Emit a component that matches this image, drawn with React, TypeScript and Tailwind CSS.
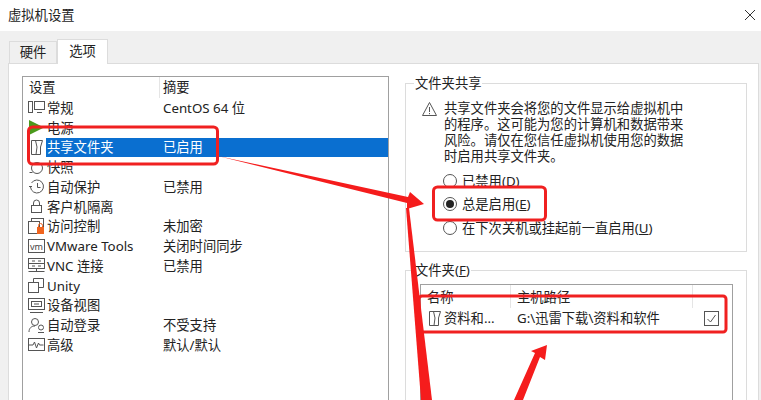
import React from 'react';

const font = { fontFamily: '"Noto Sans", "Noto Sans CJK SC", sans-serif' };

const ic = 'w-[17px] h-[17px] shrink-0';

const GeneralIcon = () => (
  <svg viewBox="0 0 17 17" className={ic} fill="none" stroke="#555" strokeWidth="1">
    <rect x="0.5" y="2.5" width="4" height="11" />
    <rect x="6.5" y="2.5" width="10" height="8" />
    <path d="M9 13.5h5" />
  </svg>
);
const PowerIcon = () => (
  <svg viewBox="0 0 17 17" className={ic}>
    <path d="M1 1l15 7.5L1 16z" fill="#4a9a1c" />
  </svg>
);
const FolderIcon = () => (
  <svg viewBox="0 0 17 17" className={ic} fill="none" stroke="#555" strokeWidth="1">
    <path d="M3.5 1.5H14.5L12.5 8v7.5H3.5z" />
    <path d="M7.5 1.5L9 8l-1 7.5" />
  </svg>
);
const SnapshotIcon = () => (
  <svg viewBox="0 0 17 17" className={ic} fill="none" stroke="#555" strokeWidth="1">
    <circle cx="9" cy="9" r="5.5" />
    <path d="M1.5 4.5h3M1.5 13.5h3" />
  </svg>
);
const ClockIcon = () => (
  <svg viewBox="0 0 17 17" className={ic} fill="none" stroke="#555" strokeWidth="1">
    <path d="M3.5 5a6.5 6.5 0 1 1-1 4" />
    <path d="M1 8.5h3M9.5 5v4.5h3" />
  </svg>
);
const LockIcon = () => (
  <svg viewBox="0 0 17 17" className={ic} fill="none" stroke="#555" strokeWidth="1">
    <rect x="3.5" y="7.5" width="10" height="7" />
    <path d="M5.5 7.5V5a3 3 0 0 1 6 0v2.5" />
  </svg>
);
const AccessIcon = () => (
  <svg viewBox="0 0 17 17" className={ic} fill="none" stroke="#555" strokeWidth="1">
    <rect x="3.5" y="0.5" width="12" height="10" />
    <rect x="0.5" y="3.5" width="11" height="12" fill="#fff" />
    <rect x="9" y="9" width="7" height="7" fill="#f0641e" stroke="none" />
    <path d="M10.5 9V7.5a2 2 0 0 1 4 0V9" stroke="#f0641e" />
  </svg>
);
const VmIcon = () => (
  <span className="w-[17px] h-[14px] shrink-0 border border-[#555] flex items-center justify-center text-[9px] leading-none text-[#444]">vm</span>
);
const VncIcon = () => (
  <svg viewBox="0 0 17 17" className={ic} fill="none" stroke="#555" strokeWidth="1">
    <rect x="0.5" y="1.5" width="16" height="10" />
    <path d="M0.5 6.5h16M0.5 14.5h16M8.5 11.5v3M4 4h3M10 4h3M4 9h3M10 9h3" />
  </svg>
);
const UnityIcon = () => (
  <svg viewBox="0 0 17 17" className={ic} fill="none" stroke="#555" strokeWidth="1">
    <rect x="0.5" y="5.5" width="10" height="10" />
    <path d="M5.5 5.5v-4h10v9h-5" />
  </svg>
);
const DeviceIcon = () => (
  <svg viewBox="0 0 17 17" className={ic} fill="none" stroke="#555" strokeWidth="1">
    <rect x="0.5" y="1.5" width="16" height="11" />
    <rect x="3.5" y="4.5" width="10" height="5" />
    <path d="M2 15.5h13M6 7h5" />
  </svg>
);
const AutoLoginIcon = () => (
  <svg viewBox="0 0 17 17" className={ic} fill="none" stroke="#555" strokeWidth="1">
    <circle cx="7" cy="5" r="3.5" />
    <path d="M1 15c0-4 2.5-6 6-6" />
    <circle cx="13" cy="10.5" r="2.5" />
    <path d="M10 15.5h6" />
  </svg>
);
const AdvancedIcon = () => (
  <svg viewBox="0 0 17 17" className={ic} fill="none" stroke="#555" strokeWidth="1">
    <rect x="0.5" y="2.5" width="16" height="12" />
    <path d="M1 9h4l1.5-3 2 6 2-5 1 2h4" />
  </svg>
);

const rows = [
  { icon: <GeneralIcon />, name: '常规', summary: 'CentOS 64 位' },
  { icon: <PowerIcon />, name: '电源', summary: '' },
  { icon: <FolderIcon />, name: '共享文件夹', summary: '已启用', selected: true },
  { icon: <SnapshotIcon />, name: '快照', summary: '' },
  { icon: <ClockIcon />, name: '自动保护', summary: '已禁用' },
  { icon: <LockIcon />, name: '客户机隔离', summary: '' },
  { icon: <AccessIcon />, name: '访问控制', summary: '未加密' },
  { icon: <VmIcon />, name: 'VMware Tools', summary: '关闭时间同步' },
  { icon: <VncIcon />, name: 'VNC 连接', summary: '已禁用' },
  { icon: <UnityIcon />, name: 'Unity', summary: '' },
  { icon: <DeviceIcon />, name: '设备视图', summary: '' },
  { icon: <AutoLoginIcon />, name: '自动登录', summary: '不受支持' },
  { icon: <AdvancedIcon />, name: '高级', summary: '默认/默认' },
];

const Radio = ({ checked, children }: { checked?: boolean; children: React.ReactNode }) => (
  <div className="flex items-center gap-[5px] h-[23.5px]">
    <span className="w-[14px] h-[14px] rounded-full border border-[#555] bg-white flex items-center justify-center">
      {checked && <span className="w-[8px] h-[8px] rounded-full bg-[#222]" />}
    </span>
    <span>{children}</span>
  </div>
);

export default function App() {
  return (
    <div className="relative w-[761px] h-[400px] overflow-hidden bg-[#f0f0f0] text-[13.3px] leading-[16px] text-[#222]" style={font}>
      <div className="h-[31px] bg-white flex items-center justify-between pl-[8px] pr-[5px] pb-[1px]">
        <span>虚拟机设置</span>
        <svg viewBox="0 0 12 12" className="w-[12px] h-[12px]" fill="none" stroke="#333" strokeWidth="1">
          <path d="M1 1l10 10M11 1L1 11" />
        </svg>
      </div>

      <div className="px-[8px]">
        <div className="flex items-end h-[32px] relative z-10">
          <div className="w-[48px] h-[22px] ml-[1px] pb-[1px] bg-[#f0f0f0] border border-b-0 border-[#dcdcdc] flex items-center justify-center">硬件</div>
          <div className="w-[51px] h-[25px] pb-[3px] bg-white border border-b-0 border-[#dcdcdc] flex items-center justify-center -mb-[1px]">选项</div>
        </div>
        <div className="h-[340px] w-[751px] bg-white border border-[#dcdcdc] flex pt-[12px] pl-[13px]">
          <div className="w-[367px] h-[340px] border border-[#a0a0a0] shrink-0">
            <div className="flex h-[21px] items-center">
              <div className="w-[137px] pl-[6px] pb-[1px] border-r border-[#e5e5e5] h-full flex items-center">设置</div>
              <div className="pl-[3px] pb-[1px]">摘要</div>
            </div>
            {rows.map((r) => (
              <div key={r.name} className="flex items-center h-[19.75px] pl-[5px] whitespace-nowrap">
                <span className="w-[18px] shrink-0 flex">{r.icon}</span>
                <div className={`flex flex-1 items-center h-full ${r.selected ? 'bg-[#0a6fd0] text-white' : ''}`}>
                  <span className="w-[117px] pl-[1px]">{r.name}</span>
                  <span>{r.summary}</span>
                </div>
              </div>
            ))}
          </div>

          <div className="ml-[16px] w-[342px] flex flex-col shrink-0 -mt-[1px]">
            <fieldset className="border border-[#dcdcdc] h-[177px] px-[8px] shrink-0">
              <legend className="px-[1px]">文件夹共享</legend>
              <div className="flex gap-[6px] pl-[7px] pt-[9px]">
                <svg viewBox="0 0 17 16" className="w-[17px] h-[16px] mt-[1px] shrink-0" fill="none" stroke="#555" strokeWidth="1">
                  <path d="M8.5 1.5L15.5 14.5H1.5z" />
                  <path d="M8.5 6v5M8.5 12v1.2" />
                </svg>
                <p className="w-[245px]">共享文件夹会将您的文件显示给虚拟机中的程序。这可能为您的计算机和数据带来风险。请仅在您信任虚拟机使用您的数据时启用共享文件夹。</p>
              </div>
              <div className="pl-[29px] pt-[5px]">
                <Radio>已禁用(<u>D</u>)</Radio>
                <Radio checked>总是启用(<u>E</u>)</Radio>
                <Radio>在下次关机或挂起前一直启用(<u>U</u>)</Radio>
              </div>
            </fieldset>

            <fieldset className="border border-[#dcdcdc] h-[200px] px-[5px] mt-[10px] shrink-0">
              <legend className="px-[1px] ml-[3px]">文件夹(<u>F</u>)</legend>
              <div className="w-[313px] h-[160px] border border-[#a0a0a0] mt-[6px] ml-[9px]">
                <div className="flex h-[23px] items-center">
                  <div className="w-[90px] pl-[6px] h-full flex items-center border-r border-[#e5e5e5]">名称</div>
                  <div className="w-[182px] pl-[6px] h-full flex items-center border-r border-[#e5e5e5]">主机路径</div>
                </div>
                <div className="flex h-[20px] items-center whitespace-nowrap">
                  <div className="w-[90px] pl-[5px] flex items-center gap-[1px]"><FolderIcon />资料和...</div>
                  <div className="w-[182px] pl-[6px]">G:\迅雷下载\资料和软件</div>
                  <span className="ml-[11px] w-[15px] h-[15px] border border-[#555] flex items-center justify-center">
                    <svg viewBox="0 0 13 13" className="w-[13px] h-[13px]" fill="none" stroke="#555" strokeWidth="1"><path d="M2.5 7l3 3 5-7" /></svg>
                  </span>
                </div>
              </div>
            </fieldset>
          </div>
        </div>
      </div>

      <svg className="absolute inset-0 w-[761px] h-[400px] pointer-events-none" viewBox="0 0 761 400" fill="none">
        <rect x="28.5" y="127" width="189" height="37" rx="4" stroke="#f02020" strokeWidth="3" />
        <rect x="433.5" y="187" width="112" height="33" rx="4" stroke="#f02020" strokeWidth="3" />
        <rect x="419" y="296" width="307" height="36" rx="3" stroke="#f02020" strokeWidth="3" />
        <path d="M218 156L408 197L410 192L424 204L407 209L407 203Z" fill="#f51c1c" />
        <path d="M406 208L409 208L432 400L421 400Z" fill="#f51c1c" />
        <path d="M547 345L545 360L540 357L523 400L514 400L535 353L531 351Z" fill="#f51c1c" />
      </svg>
    </div>
  );
}
